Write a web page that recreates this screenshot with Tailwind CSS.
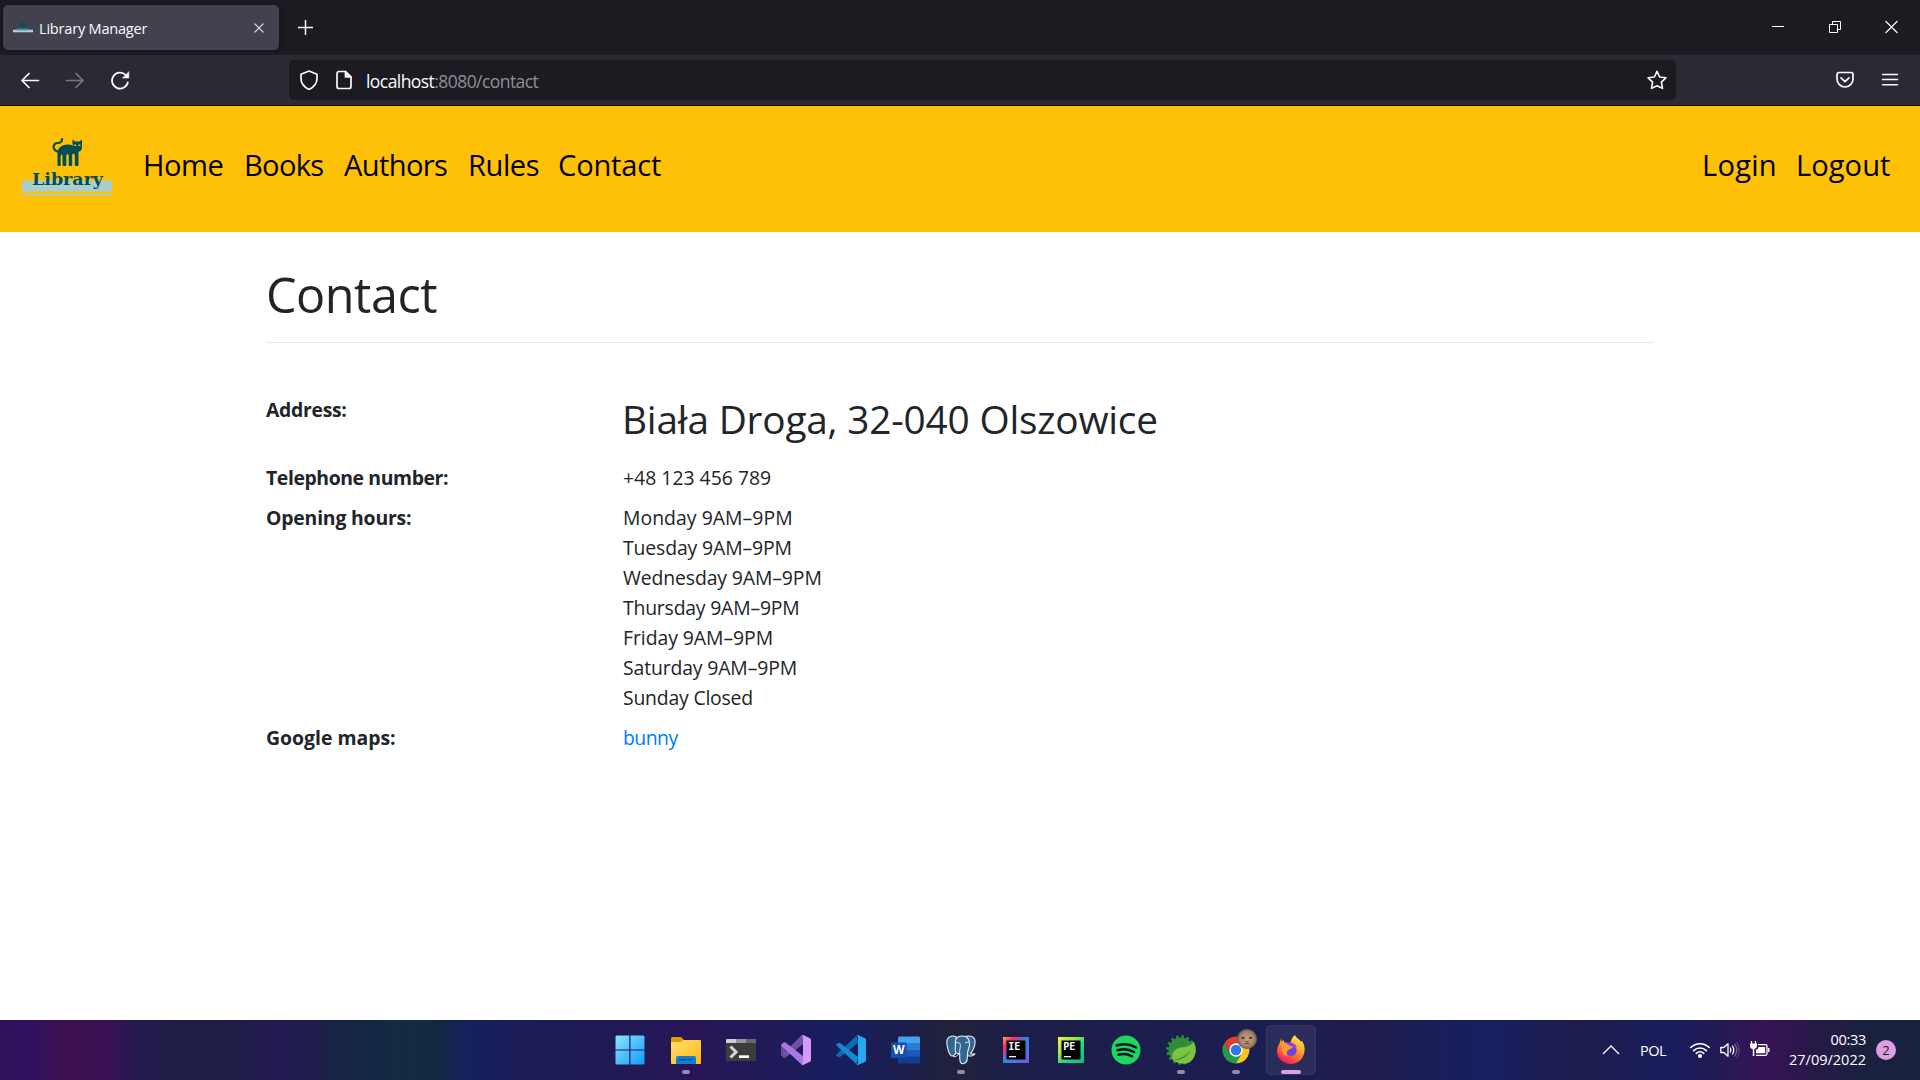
<!DOCTYPE html>
<html lang="en">
<head>
<meta charset="utf-8">
<title>Library Manager</title>
<script src="https://cdn.jsdelivr.net/npm/@tailwindcss/browser@4"></script>
</head>
<body class="flex h-[1080px] w-[1920px] flex-col overflow-hidden bg-white font-['Open_Sans',sans-serif] text-[#212529]">

<!-- Tab strip -->
<div class="flex h-[55px] shrink-0 items-start bg-[#1c1b22] pt-[5px] pl-[3px]">
  <div class="flex h-[45px] w-[276px] items-center rounded-[5px] bg-[#42414d] pl-[10px] shadow-[0_0_4px_rgba(0,0,0,0.5)]">
    <svg class="h-5 w-5 shrink-0" viewBox="0 0 20 20"><path d="M7 4l1.500 1 1.500-.5L12.500 4v4L12 9.500H8z" fill="#0b4f59"/><path d="M4 9.800h12v2H4z" fill="#2b6a72"/><path d="M0 11.700h20v2.600H0z" fill="#a9d3d3"/><path d="M4 11.500h12v1H4z" fill="#5f979b"/></svg>
    <span class="ml-[6px] w-[215px] whitespace-nowrap text-[14.55px] leading-5 tracking-[-0.21px] text-[#fbfbfe]">Library Manager</span>
    <svg class="h-[10px] w-[10px] shrink-0" viewBox="0 0 10 10" fill="none" stroke="#d0d0d6" stroke-width="1.2"><path d="M.5.5l9 9M9.500.5l-9 9"/></svg>
  </div>
  <svg class="mt-[15px] ml-[19px] h-[15px] w-[15px]" viewBox="0 0 15 15" stroke="#fbfbfe" stroke-width="1.5"><path d="M7.500 0v15M0 7.500h15"/></svg>
  <div class="mt-[15px] mr-[22px] ml-auto flex h-[14px] items-center">
    <svg class="h-[14px] w-[12px]" viewBox="0 0 12 14"><path d="M0 6h12v1H0z" fill="#fff"/></svg>
    <svg class="ml-[45px] h-[14px] w-[12px]" viewBox="0 0 12 14" fill="none" stroke="#fff"><path d="M.5 4.500h8v8h-8zM3.500 4.500v-3h8v8h-3"/></svg>
    <svg class="ml-[44px] h-[14px] w-[13px]" viewBox="0 0 13 14" fill="none" stroke="#fff" stroke-width="1.1"><path d="M.5 1l12 12M12.500 1l-12 12"/></svg>
  </div>
</div>

<!-- Toolbar -->
<div class="flex h-[51px] shrink-0 items-center border-b border-[#0c0c0d] bg-[#2b2a33] pl-5">
  <svg class="h-5 w-5" viewBox="0 0 20 20" fill="none" stroke="#fbfbfe" stroke-width="1.7" stroke-linecap="round" stroke-linejoin="round"><path d="M18.500 10.500H2M9 3.500l-7 7 7 7"/></svg>
  <svg class="ml-[25px] h-5 w-5" viewBox="0 0 20 20" fill="none" stroke="#79787f" stroke-width="1.7" stroke-linecap="round" stroke-linejoin="round"><path d="M1.500 10.500H18M11 3.500l7 7-7 7"/></svg>
  <svg class="ml-[25px] h-5 w-5" viewBox="0 0 20 20" fill="none" stroke="#fbfbfe" stroke-width="1.8" stroke-linecap="round"><path d="M17.800 12.500A8 8 0 1 1 15.800 5"/><path d="M18.800 2v6h-6z" fill="#fbfbfe" stroke-width=".6"/></svg>
  <div class="ml-[159px] flex h-10 w-[1387px] items-center rounded-[5px] bg-[#1c1b22] pl-[10px]">
    <svg class="h-5 w-5" viewBox="0 0 20 20" fill="none" stroke="#fbfbfe" stroke-width="1.7" stroke-linejoin="round"><path d="M10 1l8 3.200v4.300c0 4.500-3 8.500-8 11-5-2.500-8-6.500-8-11V4.200z"/></svg>
    <svg class="ml-[15px] h-5 w-5" viewBox="0 0 20 20" fill="none" stroke="#fbfbfe" stroke-width="1.7" stroke-linejoin="round"><path d="M11.500 1.500H5a2 2 0 0 0-2 2v13a2 2 0 0 0 2 2h10a2 2 0 0 0 2-2V7z"/><path d="M11.500 1.500V7H17z" fill="#fbfbfe"/></svg>
    <span class="mt-px ml-[12px] whitespace-nowrap text-[17.500px] leading-6 tracking-[-0.56px] text-[#8f8f98]"><span class="text-[#fbfbfe]">localhost</span>:8080/contact</span>
    <svg class="mr-[9px] ml-auto h-5 w-5" viewBox="0 0 20 20" fill="none" stroke="#fbfbfe" stroke-width="1.600" stroke-linejoin="round"><path d="M10 1.300l2.600 5.700 6.300.8-4.500 4.300 1.100 6.300L10 15.700l-5.500 2.700 1.100-6.300L1.100 7.800l6.300-.8z"/></svg>
  </div>
  <svg class="ml-[159px] h-5 w-5" viewBox="0 0 20 20" fill="none" stroke="#fbfbfe" stroke-width="1.700" stroke-linecap="round" stroke-linejoin="round"><path d="M4 2.500h12a2 2 0 0 1 2 2V9a8 8 0 0 1-16 0V4.500a2 2 0 0 1 2-2z"/><path d="M6 7.800l4 3.900 4-3.900"/></svg>
  <svg class="ml-[25px] h-5 w-5" viewBox="0 0 20 20" fill="none" stroke="#fbfbfe" stroke-width="1.500" stroke-linecap="round"><path d="M2.500 4.500h15M2.500 9.600h15M2.500 14.700h15"/></svg>
</div>

<!-- Site navigation -->
<nav class="flex h-[126px] shrink-0 bg-[#ffc107] pt-[39px] pl-5 text-[29.100px] leading-10 text-black">
  <svg class="-mt-5 h-[90px] w-[95px] shrink-0" viewBox="0 0 95 90">
    <path d="M2 55.500h90v11H2zM2 68.700h90v1.800H2z" fill="#a9cfcb"/>
    <path d="M39 27c-7-1.500-7-8.500-1.500-9 3.500 0 4.500-1 4.500-4" fill="none" stroke="#044d56" stroke-width="2.200" stroke-linecap="round"/>
    <path d="M37.500 40V29c0-6 4-9.500 10-9.500 2.500 0 4.500.5 6 1.500l-1-2v-4.500l2.500 2h4.500l2.500-2v8c0 2.500-1.500 3.800-3.500 4.200V40q0 1-1 1h-1.700q-1 0-1-1V30.500q-.3-2-1.300-2t-1.300 2V40q0 1-1 1h-1.500q-1 0-1-1V31q-.2-2-1.200-2t-1.200 2v9q0 1-1 1H43.500q-1 0-1-1v-9q-.3-1.500-.9-1.500t-.9 1.500v9q0 1-1 1h-1.200q-1 0-1-1z" fill="#044d56"/>
    <path d="M54.300 19.500h1.800v1.400h-1.800zM58.500 19.500h1.800v1.400h-1.800z" fill="#ffc107"/>
    <text x="12" y="60" textLength="71" lengthAdjust="spacingAndGlyphs" class="font-['DejaVu_Serif_Condensed','DejaVu_Serif',serif] text-[17.500px] font-bold" fill="#044d56">Library</text>
  </svg>
  <div class="flex grow pl-[28px] whitespace-nowrap">
    <a class="w-[101px] tracking-[-0.46px]">Home</a>
    <a class="w-[100px] tracking-[-0.7px]">Books</a>
    <a class="w-[124px] tracking-[-0.64px]">Authors</a>
    <a class="w-[90px] tracking-[-0.45px]">Rules</a>
    <a class="tracking-[-0.19px]">Contact</a>
    <a class="ml-auto w-[94px] tracking-[0.24px]">Login</a>
    <a class="w-[124px] tracking-[0.04px]">Logout</a>
  </div>
</nav>

<!-- Contact details -->
<main class="flex grow flex-col pt-8 pl-[266px] text-[19.400px] leading-[30px]">
  <h1 class="h-[79px] w-[1388px] border-b border-[#e4e5e5] text-[48.500px] leading-[60px] tracking-[-0.46px]">Contact</h1>
  <dl class="mt-[51px] grid w-[1388px] grid-cols-[356px_1fr] gap-y-[10px] whitespace-nowrap">
    <dt class="pt-px font-bold tracking-[-0.3px]">Address:</dt>
    <dd class="h-[59px] text-[38.800px] leading-[50px] tracking-[-0.2px]">Biała Droga, 32-040 Olszowice</dd>
    <dt class="font-bold tracking-[-0.4px]">Telephone number:</dt>
    <dd class="pl-[1px] tracking-[0px]">+48 123 456 789</dd>
    <dt class="font-bold tracking-[-0.19px]">Opening hours:</dt>
    <dd>
      <p class="pl-px tracking-[0.04px]">Monday 9AM–9PM</p>
      <p class="pl-px tracking-[-0.13px]">Tuesday 9AM–9PM</p>
      <p class="pl-px tracking-[-0.12px]">Wednesday 9AM–9PM</p>
      <p class="pl-px tracking-[-0.2px]">Thursday 9AM–9PM</p>
      <p class="pl-px tracking-[-0.06px]">Friday 9AM–9PM</p>
      <p class="pl-px tracking-[-0.14px]">Saturday 9AM–9PM</p>
      <p class="pl-px tracking-[-0.2px]">Sunday Closed</p>
    </dd>
    <dt class="font-bold">Google maps:</dt>
    <dd class="pl-px tracking-[-0.51px] text-[#007bff]">bunny</dd>
  </dl>
</main>

<!-- Taskbar -->
<footer class="flex h-[60px] shrink-0 bg-[linear-gradient(90deg,#2c1259_0px,#321061_33px,#3d1050_60px,#3c1050_90px,#371058_112px,#251a4e_138px,#1f1d47_170px,#1f1d47_230px,#231a52_280px,#1f1d4a_315px,#152645_350px,#112b41_410px,#132843_440px,#14215c_465px,#1b1c58_510px,#1e1a55_600px,#281557_690px,#211a58_760px,#171e5e_840px,#1d1e4a_910px,#20223a_955px,#1d1e48_1010px,#1a1e50_1280px,#1f1c4c_1350px,#171f60_1490px,#1e1c4d_1580px,#191d5c_1670px,#201b55_1710px,#371356_1765px,#281848_1810px,#1a2140_1860px,#17223d_1920px)] pl-[603px]">
  <div class="grid grid-cols-[repeat(13,55px)]">
    <div class="flex items-center justify-center">
      <svg class="mr-px h-[30px] w-[30px]" viewBox="0 0 30 30"><defs><linearGradient id="win" x1="0" y1="0" x2="1" y2="1" gradientUnits="objectBoundingBox"><stop stop-color="#8be4ff"/><stop offset="1" stop-color="#129bf7"/></linearGradient></defs><path d="M2 .5h12.300v14H.5V2Q.5.500 2 .5zM15.500.5H28q1.500 0 1.500 1.500v12.500h-14zM.5 15.600h13.800v13.900H2Q.5 29.500.5 28zM15.500 15.600h14V28q0 1.500-1.500 1.500H15.500z" fill="url(#win)"/></svg>
    </div>
    <div class="relative flex items-center justify-center">
      <svg class="h-[30px] w-[30px]" viewBox="0 0 30 30"><defs><linearGradient id="fold" x1="0" y1="0" x2="1" y2="1"><stop stop-color="#ffdf70"/><stop offset="1" stop-color="#fdb913"/></linearGradient></defs><path d="M0 3.500q0-1.500 1.500-1.500H10L13 5h16v8H0z" fill="#dc9c08"/><path d="M0 7h9.500L12.500 5H29q1 0 1 1V28q0 1-1 1H1q-1 0-1-1z" fill="url(#fold)"/><path d="M5 29v-6Q5 21 7 21h16q2 0 2 2V29z" fill="#1180d2"/><path d="M8 24.700h14" stroke="#0b4a85" stroke-width="1.300"/></svg>
      <i class="absolute top-[50px] h-1 w-2 rounded-full bg-[#918da9]"></i>
    </div>
    <div class="flex items-center justify-center">
      <svg class="h-[30px] w-[30px]" viewBox="0 0 30 30"><path d="M0 5q0-1 1-1h28q1 0 1 1v20q0 1-1 1H1q-1 0-1-1z" fill="#3d3d3d"/><path d="M0 8V5q0-1 1-1h9v4z" fill="#d0d0d0"/><path d="M10 4h10v4H10z" fill="#969696"/><path d="M20 4h9q1 0 1 1v3H20z" fill="#686868"/><path d="M4.500 11.500l5.500 5.500-5.500 5.500" fill="none" stroke="#d6d6d6" stroke-width="3"/><path d="M13 20.300h10V23H13z" fill="#fff"/></svg>
    </div>
    <div class="flex items-center justify-center">
      <svg class="h-[30px] w-[30px]" viewBox="0 0 30 30"><path d="M0 10l3-2.500 1.500.5v14L3 22.500 0 20z" fill="#684b94"/><path d="M0 20l2.500 2.500q1 .5 2 0L22 9V0q-1 0-2 1L1.500 19z" fill="#7450a5"/><path d="M0 10l2.500-2.500q1-.5 2 0L22 21v9q-1 0-2-1L1.500 12z" fill="#a878df"/><path d="M20.500 29.500q1.500-.5 1.500-2V2.500q0-1.500-1.500-2L22 0l7 3.200q1 .5 1 1.800v20q0 1.300-1 1.800L22 30z" fill="#d19bfb"/></svg>
    </div>
    <div class="flex items-center justify-center">
      <svg class="h-[30px] w-[30px]" viewBox="0 0 30 30"><path d="M.5 19.500L20.500.8 22 8 4 22q-1 .6-1.800 0L.4 20.600q-.6-.6.1-1.100z" fill="#0b6cb5"/><path d="M.5 10.500L20.500 29.200 22 22 4 8q-1-.6-1.800 0L.4 9.400q-.6.6.1 1.100z" fill="#1389d2"/><path d="M20.500 29.500q1.500-.5 1.500-2V2.500q0-1.500-1.500-2L22 0l7 3.200q1 .5 1 1.800v20q0 1.300-1 1.800L22 30z" fill="#29a8f2"/></svg>
    </div>
    <div class="flex items-center justify-center">
      <svg class="h-[30px] w-[30px]" viewBox="0 0 30 30"><path d="M7 8.500V3q0-1.500 1.500-1.500h19Q29 1.500 29 3v5.500z" fill="#41a5ee"/><path d="M7 8h22v7H7z" fill="#2b7cd3"/><path d="M7 15h22v7H7z" fill="#185abd"/><path d="M7 21.500h22V27q0 1.500-1.500 1.500h-19Q7 28.500 7 27z" fill="#103f91"/><rect y="7.500" width="15.500" height="15.500" rx="1.300" fill="#174fb0"/><text x="7.700" y="19.300" text-anchor="middle" class="text-[12px] font-bold" fill="#fff">W</text></svg>
    </div>
    <div class="relative flex items-center justify-center">
      <svg class="h-[30px] w-[30px]" viewBox="0 0 30 30" fill="#336791" stroke="#e8eef5" stroke-width="1.100" stroke-linejoin="round"><path d="M18 1.800C22 .3 28.500.5 29 6c.3 5-2.500 10-4.500 12.500 1 1 2.500.8 4.500.3-1.500 2.500-5 2.700-7.500 1.700z"/><path d="M10 1.500C5 .2.8 2 .8 7c0 4 2 13 5 14 2 .5 3.500-2 4.500-4z"/><path d="M9.500 6C10 2.500 13 1 16.500 1c5 0 7.500 4 7 9-.3 3-2 5.500-2 9 0 6-.5 9.500-4 9.800-3.200.2-3.800-2-3.800-6.800v-4c-2 1.500-4.500.5-4.500-3z"/><path d="M7 21.500c3 .8 4-.8 6.500-3M10 8c1.500-1 4-.5 4.300 1.500.3 3-.8 5-.8 8M19 8c1-1 3-1 4-.5" fill="none" stroke-width=".9"/></svg>
      <i class="absolute top-[50px] h-1 w-2 rounded-full bg-[#918da9]"></i>
    </div>
    <div class="flex items-center justify-center">
      <svg class="h-[26px] w-[26px]" viewBox="0 0 26 26"><defs><linearGradient id="ie" x1="0" y1="0" x2="1" y2="1"><stop stop-color="#fdb02b"/><stop offset=".22" stop-color="#fb2a72"/><stop offset=".5" stop-color="#2389ec"/><stop offset="1" stop-color="#7658e8"/></linearGradient></defs><path d="M0 0h26v26H0z" fill="url(#ie)"/><path d="M3.500 3.500h19v19h-19z"/><path d="M6 19h7v1.300H6z" fill="#fff"/><text x="5.300" y="13" class="font-['DejaVu_Sans_Mono',monospace] text-[10px] font-bold" fill="#fff">IE</text></svg>
    </div>
    <div class="flex items-center justify-center">
      <svg class="h-[26px] w-[26px]" viewBox="0 0 26 26"><defs><linearGradient id="pe" x1="0" y1="0" x2="1" y2="1"><stop stop-color="#f3f044"/><stop offset=".35" stop-color="#9be83d"/><stop offset=".6" stop-color="#21d789"/><stop offset="1" stop-color="#12b882"/></linearGradient></defs><path d="M0 0h26v26H0z" fill="url(#pe)"/><path d="M3.500 3.500h19v19h-19z"/><path d="M6 19h7v1.300H6z" fill="#fff"/><text x="5.300" y="13" class="font-['DejaVu_Sans_Mono',monospace] text-[10px] font-bold" fill="#fff">PE</text></svg>
    </div>
    <div class="flex items-center justify-center">
      <svg class="h-[30px] w-[30px]" viewBox="0 0 30 30"><circle cx="15" cy="15" r="14.500" fill="#1ed760"/><path d="M5.500 10.500c7-2 14-1.200 19.500 2M6.500 15.300c6-1.800 12-1 16.500 1.700M7.500 19.700c5-1.300 9.500-.7 13.500 1.600" fill="none" stroke="#0d1020" stroke-width="2.500" stroke-linecap="round"/></svg>
    </div>
    <div class="relative flex items-center justify-center">
      <svg class="h-[30px] w-[30px]" viewBox="0 0 30 30"><circle cx="15" cy="15" r="12.500" fill="#2f8c3b"/><circle cx="15" cy="15" r="13.300" fill="none" stroke="#2f8c3b" stroke-width="3" stroke-dasharray="2.600 2.620"/><path d="M27.500 6.500c4 7 2.500 16-3 20-4 3-10 3.500-18-1.500-1.500-7 2-11.500 8.500-12.500 5.500-.8 9.500-1 12.500-6z" fill="#7cc243"/><path d="M6.500 25c8 .5 14.500-2.500 18.500-10-5 6-10 8.500-18.500 10z" fill="#2f8c3b"/></svg>
      <i class="absolute top-[50px] h-1 w-2 rounded-full bg-[#918da9]"></i>
    </div>
    <div class="relative flex items-center justify-center">
      <svg class="h-[30px] w-[30px] overflow-visible" viewBox="0 0 30 30"><defs><radialGradient id="fur"><stop stop-color="#c5a184"/><stop offset=".7" stop-color="#a58570"/><stop offset="1" stop-color="#735645"/></radialGradient></defs><path d="M15 8.300h11.700A13.500 13.500 0 0 1 15 28.500z" fill="#fcc31e"/><path d="M20.800 18.400L15 28.500A13.500 13.500 0 0 1 3.300 8.200L9.200 18.400z" fill="#249a4b"/><path d="M15 8.300h11.700A13.500 13.500 0 0 0 3.300 8.200L9.200 18.400z" fill="#e33b2e"/><circle cx="15" cy="15" r="6.700" fill="#fff"/><circle cx="15" cy="15" r="5.300" fill="#3178e8"/><circle cx="26" cy="4" r="10" fill="url(#fur)"/><path d="M20.500 2.800h3M28 2.800h3" stroke="#49352c" stroke-width="1.700"/><path d="M24.500 6l1.500 1 1.500-1M23.500 9q2.500-1.500 5 0" fill="none" stroke="#65473a"/></svg>
      <i class="absolute top-[50px] h-1 w-2 rounded-full bg-[#918da9]"></i>
    </div>
    <div class="relative flex items-center justify-center">
      <div class="absolute top-[5px] h-[50px] w-[50px] rounded-[5px] border border-white/5 bg-white/7"></div>
      <svg class="relative h-[30px] w-[30px]" viewBox="0 0 30 30"><defs><linearGradient id="fx" x1=".85" y1="0" x2=".3" y2="1"><stop stop-color="#fff44f"/><stop offset=".35" stop-color="#ffb52c"/><stop offset=".65" stop-color="#ff6b35"/><stop offset="1" stop-color="#f4145e"/></linearGradient></defs><path d="M5 3.200l.7 3.300 2-1.500.6 2.500c3 0 4 .2 6 1 .8-3.500 2-7 4.700-8.500.8 3 5 4 5.500 6.500l1.500-.5c2 2.500 3 6.500 2.500 10.500C27.500 24 22 29 15 29S1.500 24 1 17.500c-.3-4 1.500-7.500 2.500-9z" fill="url(#fx)"/><circle cx="15" cy="15.500" r="5.600" fill="#6a47dc"/><path d="M9.500 8.500c5-2.500 10 0 11.500 4-2-1-3-1-4 .3z" fill="#a538ef"/><path d="M5 9c4-1.500 7 0 9 2l3 .7c-1 2.500-4 2-5.500 4-1 1.500-1 3.500 0 5-4 0-6-3.500-6-7z" fill="#ff9a2e"/></svg>
      <i class="absolute top-[50px] h-1 w-5 rounded-full bg-[#dc9fe3]"></i>
    </div>
  </div>

  <!-- System tray -->
  <div class="mr-[24px] ml-auto flex items-center text-[14.550px] leading-5 text-white">
    <svg class="h-5 w-[18px]" viewBox="0 0 18 20" fill="none" stroke="#fff" stroke-width="1.300"><path d="M1 14l8-8 8 8"/></svg>
    <span class="ml-5 w-[50px] tracking-[-0.5px]">POL</span>
    <svg class="h-5 w-5" viewBox="0 0 20 20" fill="none" stroke="#fff" stroke-width="1.500" stroke-linecap="round"><path d="M.8 7.500a13 13 0 0 1 18.400 0M3.600 10.600a9 9 0 0 1 12.800 0M6.300 13.400a5.200 5.200 0 0 1 7.400 0"/><circle cx="10" cy="16" r="1.300" fill="#fff"/></svg>
    <svg class="ml-[10px] h-5 w-5" viewBox="0 0 20 20" fill="none" stroke="#fff" stroke-width="1.300" stroke-linecap="round" stroke-linejoin="round"><path d="M.8 7.500h3L8 3.800v12.400l-4.200-3.700h-3zM10.300 8q1.400 2 0 4M12.500 6q2.500 4 0 8"/><path d="M14.800 4q4 6 0 12" stroke-opacity=".35"/><path d="M17 2.500q4.500 7.500 0 15" stroke-opacity=".2"/></svg>
    <svg class="ml-[10px] h-5 w-5" viewBox="0 0 20 20"><path d="M1.500 1v3M5.500 1v3" stroke="#fff" stroke-width="1.300"/><path d="M0 3.500h7V6q0 2.500-2.700 3v7H2.800V9Q0 8.500 0 6z" fill="#fff"/><path d="M8 4.700h7.500q1.500 0 1.500 1.500v7.600q0 1.500-1.500 1.500H6" fill="none" stroke="#fff" stroke-width="1.300"/><path d="M8.500 7h6.700v6.200H6V10q2.500-1 2.500-3zM18 8h1.500v4H18z" fill="#fff"/></svg>
    <div class="-mt-0.5 ml-[19px] w-[77px] text-right whitespace-nowrap">
      <div class="tracking-[-0.32px]">00:33</div>
      <div class="tracking-[-0.02px]">27/09/2022</div>
    </div>
    <div class="ml-[10px] flex h-5 w-5 items-center justify-center rounded-full bg-[#dc9fe3] text-[13px] text-[#1c1c1c]">2</div>
  </div>
</footer>
</body>
</html>
